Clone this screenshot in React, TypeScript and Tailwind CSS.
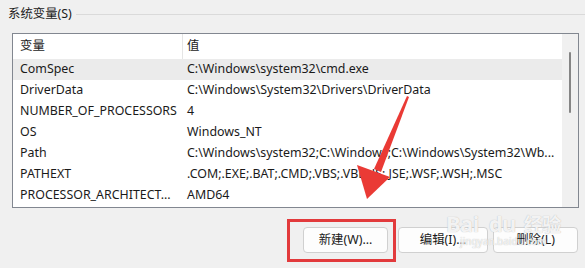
const rows: [string, string][] = [
  ["ComSpec", "C:\\Windows\\system32\\cmd.exe"],
  ["DriverData", "C:\\Windows\\System32\\Drivers\\DriverData"],
  ["NUMBER_OF_PROCESSORS", "4"],
  ["OS", "Windows_NT"],
  ["Path", "C:\\Windows\\system32;C:\\Windows;C:\\Windows\\System32\\Wb..."],
  ["PATHEXT", ".COM;.EXE;.BAT;.CMD;.VBS;.VBE;.JS;.JSE;.WSF;.WSH;.MSC"],
  ["PROCESSOR_ARCHITECT...", "AMD64"],
];

function Btn({ label, className }: { label: string; className: string }) {
  return (
    <button
      className={`h-[26px] rounded-[4px] border border-[#d0d0d0] bg-[#fdfdfd] text-[12.4px] text-[#1a1a1a] ${className}`}
    >
      {label}
    </button>
  );
}

export default function App() {
  return (
    <div
      className="relative h-[268px] w-[585px] overflow-hidden bg-[#f0f0f0] text-[12.4px] text-[#1a1a1a]"
      style={{ fontFamily: '"Noto Sans", "Noto Sans CJK SC", sans-serif' }}
    >
      {/* group header */}
      <div className="flex h-[28px] items-center pl-[8px]">
        <span className="pr-[4px]">系统变量(S)</span>
        <div className="h-px flex-1 bg-[#dadada]" />
      </div>

      {/* list view */}
      <div className="ml-[12px] mt-[5px] flex h-[175px] w-[567px] border border-[#828790] bg-white">
        <div className="flex-1">
          <div className="flex h-[25px] items-center">
            <div className="flex h-full w-[169px] items-center pl-[7px]">变量</div>
            <div className="h-full w-px bg-[#e5e5e5]" />
            <div className="pl-[4px]">值</div>
          </div>
          {rows.map(([name, value], i) => (
            <div
              key={name}
              className={`flex h-[21px] items-center whitespace-nowrap ${i === 0 ? "bg-[#ebebeb]" : ""}`}
            >
              <div className="w-[170px] pl-[7px]">{name}</div>
              <div className="pl-[4px]">{value}</div>
            </div>
          ))}
        </div>
        <div className="relative w-[16px] bg-[#f0f0f0]">
          <div className="absolute left-[7px] top-[18px] h-[61px] w-[2px] rounded-full bg-[#858585]" />
        </div>
      </div>

      {/* buttons */}
      <div className="mt-[19px] flex">
        <Btn label="新建(W)..." className="ml-[303px] w-[85px]" />
        <Btn label="编辑(I)..." className="ml-[10px] w-[90px]" />
        <Btn label="删除(L)" className="ml-[5px] w-[85px]" />
      </div>

      {/* watermark */}
      <div className="pointer-events-none absolute left-[446px] top-[212px] flex flex-col items-center text-white/85 [text-shadow:0_0_1px_#a8a8a8]">
        <div className="flex items-baseline text-[22px] font-bold leading-none tracking-tight">
          <span>Bai</span>
          <span className="ml-[10px]">du</span>
          <span className="ml-[8px] text-[19px]">经验</span>
        </div>
        <div className="mt-[1px] text-[10px] leading-none">jingyan.baidu.com</div>
      </div>

      {/* annotation */}
      <div className="pointer-events-none absolute left-[287px] top-[219px] h-[43px] w-[109px] border-[3px] border-[#e23a3c]" />
      <svg className="pointer-events-none absolute left-0 top-0" width="585" height="268">
        <polygon points="407,96 409,97 381,172 374,169" fill="#ea3a35" />
        <polygon points="357,165 390,177 367,199" fill="#ea3a35" />
      </svg>
    </div>
  );
}
